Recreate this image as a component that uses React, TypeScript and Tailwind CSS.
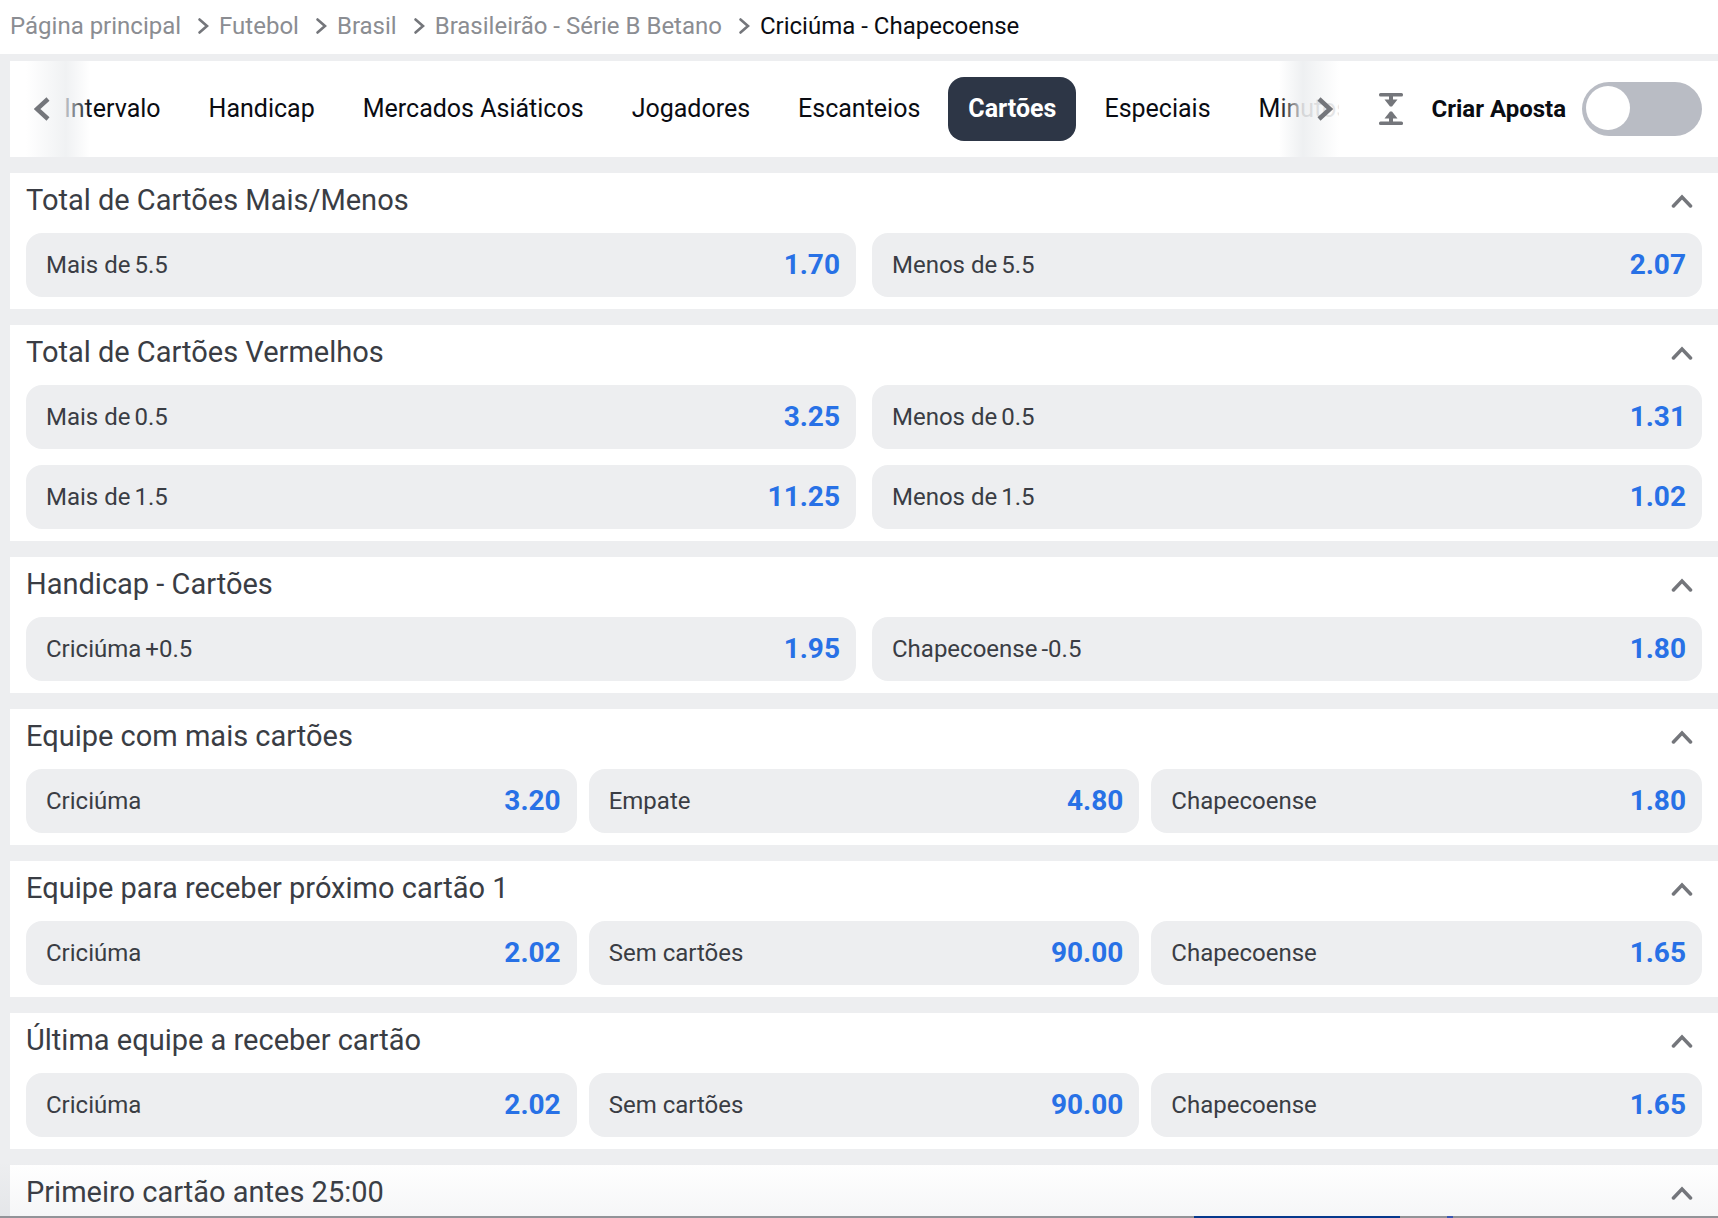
import { useState } from "react";
import clsx from "clsx";

interface Selection {
  name: string;
  line?: string;
  odds: string;
}

interface Market {
  title: string;
  columns: 2 | 3;
  selections: Selection[];
}

const breadcrumbs = ["Página principal", "Futebol", "Brasil", "Brasileirão - Série B Betano"];

const tabs = [
  "Intervalo",
  "Handicap",
  "Mercados Asiáticos",
  "Jogadores",
  "Escanteios",
  "Cartões",
  "Especiais",
  "Minutos",
];

const markets: Market[] = [
  {
    title: "Total de Cartões Mais/Menos",
    columns: 2,
    selections: [
      { name: "Mais de", line: "5.5", odds: "1.70" },
      { name: "Menos de", line: "5.5", odds: "2.07" },
    ],
  },
  {
    title: "Total de Cartões Vermelhos",
    columns: 2,
    selections: [
      { name: "Mais de", line: "0.5", odds: "3.25" },
      { name: "Menos de", line: "0.5", odds: "1.31" },
      { name: "Mais de", line: "1.5", odds: "11.25" },
      { name: "Menos de", line: "1.5", odds: "1.02" },
    ],
  },
  {
    title: "Handicap - Cartões",
    columns: 2,
    selections: [
      { name: "Criciúma", line: "+0.5", odds: "1.95" },
      { name: "Chapecoense", line: "-0.5", odds: "1.80" },
    ],
  },
  {
    title: "Equipe com mais cartões",
    columns: 3,
    selections: [
      { name: "Criciúma", odds: "3.20" },
      { name: "Empate", odds: "4.80" },
      { name: "Chapecoense", odds: "1.80" },
    ],
  },
  {
    title: "Equipe para receber próximo cartão 1",
    columns: 3,
    selections: [
      { name: "Criciúma", odds: "2.02" },
      { name: "Sem cartões", odds: "90.00" },
      { name: "Chapecoense", odds: "1.65" },
    ],
  },
  {
    title: "Última equipe a receber cartão",
    columns: 3,
    selections: [
      { name: "Criciúma", odds: "2.02" },
      { name: "Sem cartões", odds: "90.00" },
      { name: "Chapecoense", odds: "1.65" },
    ],
  },
  { title: "Primeiro cartão antes 25:00", columns: 2, selections: [] },
];

function CrumbArrow() {
  return (
    <svg className="ml-4 mr-2.5 h-[18px] w-3 shrink-0" viewBox="0 0 12 18" fill="none" aria-hidden="true">
      <path d="M2.500 2.500 10 9l-7.500 6.500" stroke="#74767b" strokeWidth="2.600" strokeLinecap="round" />
    </svg>
  );
}

function Breadcrumbs() {
  return (
    <nav aria-label="Breadcrumb" className="bg-white px-2.5 h-[54px] shrink-0">
      <ol className="flex h-[52px] items-center text-2xl text-[#8b8d92] whitespace-nowrap">
        {breadcrumbs.map((crumb) => (
          <li key={crumb} className="flex items-center">
            <a href="#">{crumb}</a>
            <CrumbArrow />
          </li>
        ))}
        <li aria-current="page" className="text-[#0a0c12]">
          Criciúma - Chapecoense
        </li>
      </ol>
    </nav>
  );
}

function MarketTabs() {
  const [active, setActive] = useState("Cartões");

  return (
    <div className="relative h-24 min-w-0 flex-1 overflow-hidden">
      <div role="tablist" className="flex h-full items-center gap-2 pl-[34px]">
        {tabs.map((tab) => (
          <button
            key={tab}
            role="tab"
            aria-selected={active === tab}
            onClick={() => setActive(tab)}
            className={clsx(
              "h-16 shrink-0 rounded-2xl px-5 text-[25px] whitespace-nowrap",
              active === tab ? "bg-[#2d3646] font-bold text-white" : "text-[#0a0c12]",
            )}
          >
            {tab}
          </button>
        ))}
      </div>

      {/* scroll arrows sit on top of the fading edges */}
      <button
        aria-label="Anterior"
        className="absolute inset-y-0 left-0 flex w-20 items-center bg-linear-to-r from-white from-20% via-[#eceef0]/80 via-70% to-white/0 pl-6"
      >
        <svg className="h-6 w-4" viewBox="0 0 16 24" fill="none" aria-hidden="true">
          <path d="M14 2 3 12l11 10" stroke="#74767b" strokeWidth="4.500" />
        </svg>
      </button>
      <button
        aria-label="Próximo"
        className="absolute inset-y-0 right-0 flex w-[60px] items-center justify-end bg-linear-to-l from-white/90 via-[#eceef0]/90 via-60% to-white/0 pr-1.5"
      >
        <svg className="h-6 w-4" viewBox="0 0 16 24" fill="none" aria-hidden="true">
          <path d="m2 2 11 10L2 22" stroke="#74767b" strokeWidth="4.500" />
        </svg>
      </button>
    </div>
  );
}

function CreateBet() {
  const [enabled, setEnabled] = useState(false);

  return (
    <label className="flex cursor-pointer items-center gap-4 text-2xl font-bold text-[#0a0c12] whitespace-nowrap">
      Criar Aposta
      <input
        type="checkbox"
        role="switch"
        checked={enabled}
        onChange={(e) => setEnabled(e.target.checked)}
        className="flex h-[54px] w-[120px] appearance-none rounded-full bg-[#b9bcc4] p-1 before:size-11 before:rounded-full before:bg-white before:content-[''] checked:justify-end checked:bg-[#2871e6]"
      />
    </label>
  );
}

function Toolbar() {
  return (
    <div className="flex shrink-0 items-center bg-white pr-4">
      <MarketTabs />
      <button aria-label="Recolher tudo" className="ml-10 mr-7 shrink-0">
        <svg className="h-8 w-6" viewBox="0 0 24 32" fill="#74767b" aria-hidden="true">
          <rect width="24" height="3.500" rx="1.500" />
          <path d="M10 3h4v3.500h4.500L13 13.500h-2L5.500 6.500H10z" />
          <path d="M10 29h4v-3.500h4.500L13 18.500h-2l-5.500 7H10z" />
          <rect y="28.500" width="24" height="3.500" rx="1.500" />
        </svg>
      </button>
      <CreateBet />
    </div>
  );
}

function SelectionButton({ name, line, odds }: Selection) {
  return (
    <button className="flex h-16 items-center justify-between rounded-2xl bg-[#edeef0] pl-5 pr-4">
      <span className="flex gap-1 text-2xl text-[#3a3d44]">
        <span>{name}</span>
        {line && <span>{line}</span>}
      </span>
      <span className="text-[28px] font-bold text-[#2871e6]">{odds}</span>
    </button>
  );
}

function MarketCard({ title, columns, selections }: Market) {
  const [open, setOpen] = useState(true);

  return (
    <section className="shrink-0 bg-white px-4 pb-3">
      <h2>
        <button
          onClick={() => setOpen(!open)}
          aria-expanded={open}
          className="flex h-[60px] w-full items-center justify-between pr-2 pb-1 text-[29px] text-[#3a3d44]"
        >
          {title}
          <svg
            className={clsx("h-[14px] w-6", !open && "rotate-180")}
            viewBox="0 0 24 14"
            fill="none"
            aria-hidden="true"
          >
            <path d="m3.500 12 8.500-9 8.500 9" stroke="#74767b" strokeWidth="3.500" strokeLinecap="round" />
          </svg>
        </button>
      </h2>
      {open && (
        <div className={clsx("grid", columns === 2 ? "grid-cols-2 gap-4" : "grid-cols-3 gap-3")}>
          {selections.map((selection, index) => (
            <SelectionButton key={index} {...selection} />
          ))}
        </div>
      )}
    </section>
  );
}

export default function App() {
  return (
    <div className="relative flex h-screen flex-col overflow-hidden bg-[#edeef0] font-[Roboto,sans-serif]">
      <Breadcrumbs />
      <main className="mt-[7px] ml-2.5 flex min-h-0 flex-1 flex-col gap-4 overflow-hidden">
        <Toolbar />
        {markets.map((market) => (
          <MarketCard key={market.title} {...market} />
        ))}
      </main>
      <div className="pointer-events-none absolute inset-x-0 bottom-0 h-14 bg-linear-to-b from-black/0 to-[#5a6478]/6" />
      {/* top edge of the docked bet slip bar */}
      <footer className="relative flex h-0.5 shrink-0 bg-[#929398]">
        <span className="ml-[69.500%] w-[12%] bg-[#06388c]" />
        <span className="ml-[2.700%] w-1.5 bg-[#3a56b0]" />
      </footer>
    </div>
  );
}
